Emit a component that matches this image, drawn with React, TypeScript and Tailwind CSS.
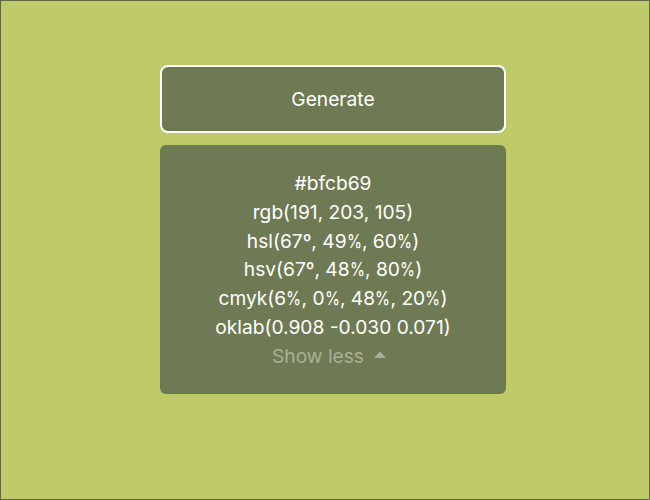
import React from "react";

function Line({ text }: { text: string }) {
  const parts = text.split("%");
  return (
    <div>
      {parts.map((p, i) => (
        <React.Fragment key={i}>
          {p}
          {i < parts.length - 1 && (
            <span className="inline-block mx-[-1.75px] scale-x-[0.8]">%</span>
          )}
        </React.Fragment>
      ))}
    </div>
  );
}

export default function App() {
  const lines = [
    "#bfcb69",
    "rgb(191, 203, 105)",
    "hsl(67º, 49%, 60%)",
    "hsv(67º, 48%, 80%)",
    "cmyk(6%, 0%, 48%, 20%)",
    "oklab(0.908 -0.030 0.071)",
  ];
  return (
    <div
      className="h-[500px] w-[650px] border border-[#5f6841] bg-[#bfcb69]"
      style={{ fontFamily: "Inter, 'Noto Sans', sans-serif" }}
    >
      <div className="ml-[159px] mt-[64px] flex w-[346px] flex-col gap-3">
        <button className="h-[68px] w-full rounded-lg border-2 border-white bg-[#6e7a53] text-[19.2px] text-white">
          Generate
        </button>
        <div className="flex flex-col items-center rounded-md bg-[#6e7a53] pt-6 pb-[23px] text-[19.2px] leading-[28.8px] text-white">
          {lines.map((l) => (
            <Line key={l} text={l} />
          ))}
          <div className="flex items-center gap-2.5 text-[#a9b098]">
            <span>Show less</span>
            <svg width="12" height="7" viewBox="0 0 12 7" className="mb-[3px] mr-2">
              <path d="M1 6.5 L6 1 L11 6.5 Z" fill="#a9b098" strokeLinejoin="round" stroke="#a9b098" strokeWidth="1" />
            </svg>
          </div>
        </div>
      </div>
    </div>
  );
}
